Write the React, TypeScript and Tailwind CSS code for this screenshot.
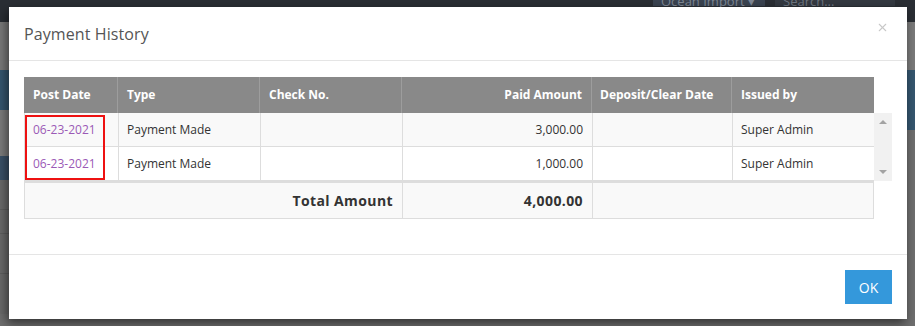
import { X } from "lucide-react";

const rows = [
  { date: "06-23-2021", type: "Payment Made", check: "", amount: "3,000.00", clear: "", by: "Super Admin" },
  { date: "06-23-2021", type: "Payment Made", check: "", amount: "1,000.00", clear: "", by: "Super Admin" },
];

const cols = "grid grid-cols-[94px_142px_142px_190px_140px_142px]";

export default function App() {
  return (
    <div
      className="relative w-[915px] h-[326px] overflow-hidden bg-[#6e6e6e]"
      style={{ fontFamily: '"Open Sans", "Noto Sans", sans-serif' }}
    >
      {/* dimmed page behind the modal */}
      <div className="h-[22px] bg-[#2a2e34] flex items-start justify-end pr-[20px] gap-[10px]">
        <div className="h-[12px] -mt-[6px] w-[112px] bg-[#3a4350] text-[13px] text-[#7e8794] leading-[14px] px-[8px]">
          Ocean Import ▾
        </div>
        <div className="h-[12px] -mt-[6px] w-[120px] bg-[#343941] text-[13px] text-[#6e7680] leading-[14px] px-[8px]">
          Search...
        </div>
      </div>
      <div className="flex flex-col w-[9px]">
        <div className="h-[48px] bg-[#7a7a7a]" />
        <div className="h-[40px] bg-[#35566f]" />
        <div className="h-[46px] bg-[#7c7c7c]" />
        <div className="h-[24px] bg-[#3a5168]" />
        <div className="h-[30px] bg-[#6a6a6a] border-b border-[#5e5e5e]" />
        <div className="h-[24px] bg-[#6a6a6a] border-b border-[#5e5e5e]" />
        <div className="h-[40px] bg-[#6a6a6a] border-b border-[#5e5e5e]" />
        <div className="h-[40px] bg-[#6a6a6a]" />
      </div>
      <div className="absolute right-0 top-[22px] w-[9px] flex flex-col">
        <div className="h-[48px] bg-[#7a7a7a]" />
        <div className="h-[60px] bg-[#35566f]" />
        <div className="h-[170px] bg-[#6f6f6f]" />
      </div>

      {/* modal */}
      <div className="absolute left-[9px] top-[7px] w-[898px] h-[312px] bg-white flex flex-col shadow-[-2px_4px_10px_rgba(0,0,0,0.55)]">
        <div className="h-[54px] shrink-0 border-b border-[#e5e5e5] flex items-center justify-between pl-[15px] pr-[18px]">
          <span className="text-[16px] text-[#555] tracking-[0.1px]">Payment History</span>
          <X className="w-[13px] h-[13px] text-[#c8c8c8] -mt-[12px]" strokeWidth={2} />
        </div>

        <div className="flex-1 pt-[16px] pl-[15px]">
          {/* header */}
          <div className={`${cols} w-[850px] h-[36px] bg-[#898989] text-white text-[12px] font-bold`}>
            <div className="px-[9px] flex items-center border-r border-[#9d9d9d]">Post Date</div>
            <div className="px-[9px] flex items-center border-r border-[#9d9d9d]">Type</div>
            <div className="px-[9px] flex items-center border-r border-[#9d9d9d]">Check No.</div>
            <div className="px-[9px] flex items-center justify-end border-r border-[#9d9d9d]">Paid Amount</div>
            <div className="px-[8px] flex items-center border-r border-[#9d9d9d]">Deposit/Clear Date</div>
            <div className="px-[9px] flex items-center">Issued by</div>
          </div>

          {/* body with scrollbar */}
          <div className="flex">
            <div className="relative w-[850px] border-l border-[#dddddd]">
              {rows.map((r, i) => (
                <div
                  key={i}
                  className={`${cols} h-[34px] text-[12px] text-[#333] border-b border-[#dddddd] ${i % 2 === 0 ? "bg-[#f9f9f9]" : "bg-white"}`}
                >
                  <div className="px-[8px] flex items-center border-r border-[#dddddd] text-[#9b59b6]">{r.date}</div>
                  <div className="px-[8px] flex items-center border-r border-[#dddddd]">{r.type}</div>
                  <div className="px-[8px] flex items-center border-r border-[#dddddd]">{r.check}</div>
                  <div className="px-[9px] flex items-center justify-end border-r border-[#dddddd]">{r.amount}</div>
                  <div className="px-[8px] flex items-center border-r border-[#dddddd]">{r.clear}</div>
                  <div className="px-[8px] flex items-center">{r.by}</div>
                </div>
              ))}
              <div className="absolute left-0 top-[2px] w-[80px] h-[65px] border-2 border-[#ee1111]" />
            </div>
            <div className="w-[18px] h-[68px] bg-[#f1f1f1] flex flex-col items-center justify-between py-[7px]">
              <div className="w-0 h-0 border-l-[4px] border-r-[4px] border-b-[4px] border-l-transparent border-r-transparent border-b-[#a3a3a3]" />
              <div className="w-0 h-0 border-l-[4px] border-r-[4px] border-t-[4px] border-l-transparent border-r-transparent border-t-[#a3a3a3]" />
            </div>
          </div>

          {/* total */}
          <div className="grid grid-cols-[378px_190px_282px] w-[850px] h-[38px] bg-[#f9f9f9] border-t-2 border-b border-x border-[#dddddd] text-[14px] font-bold text-[#333] tracking-[0.4px]">
            <div className="px-[9px] flex items-center justify-end border-r border-[#dddddd]">Total Amount</div>
            <div className="px-[9px] flex items-center justify-end border-r border-[#dddddd]">4,000.00</div>
            <div />
          </div>
        </div>

        <div className="h-[65px] shrink-0 border-t border-[#e5e5e5] flex items-center justify-end pr-[15px]">
          <button className="w-[47px] h-[34px] bg-[#3498db] text-white text-[14px]">OK</button>
        </div>
      </div>
    </div>
  );
}
